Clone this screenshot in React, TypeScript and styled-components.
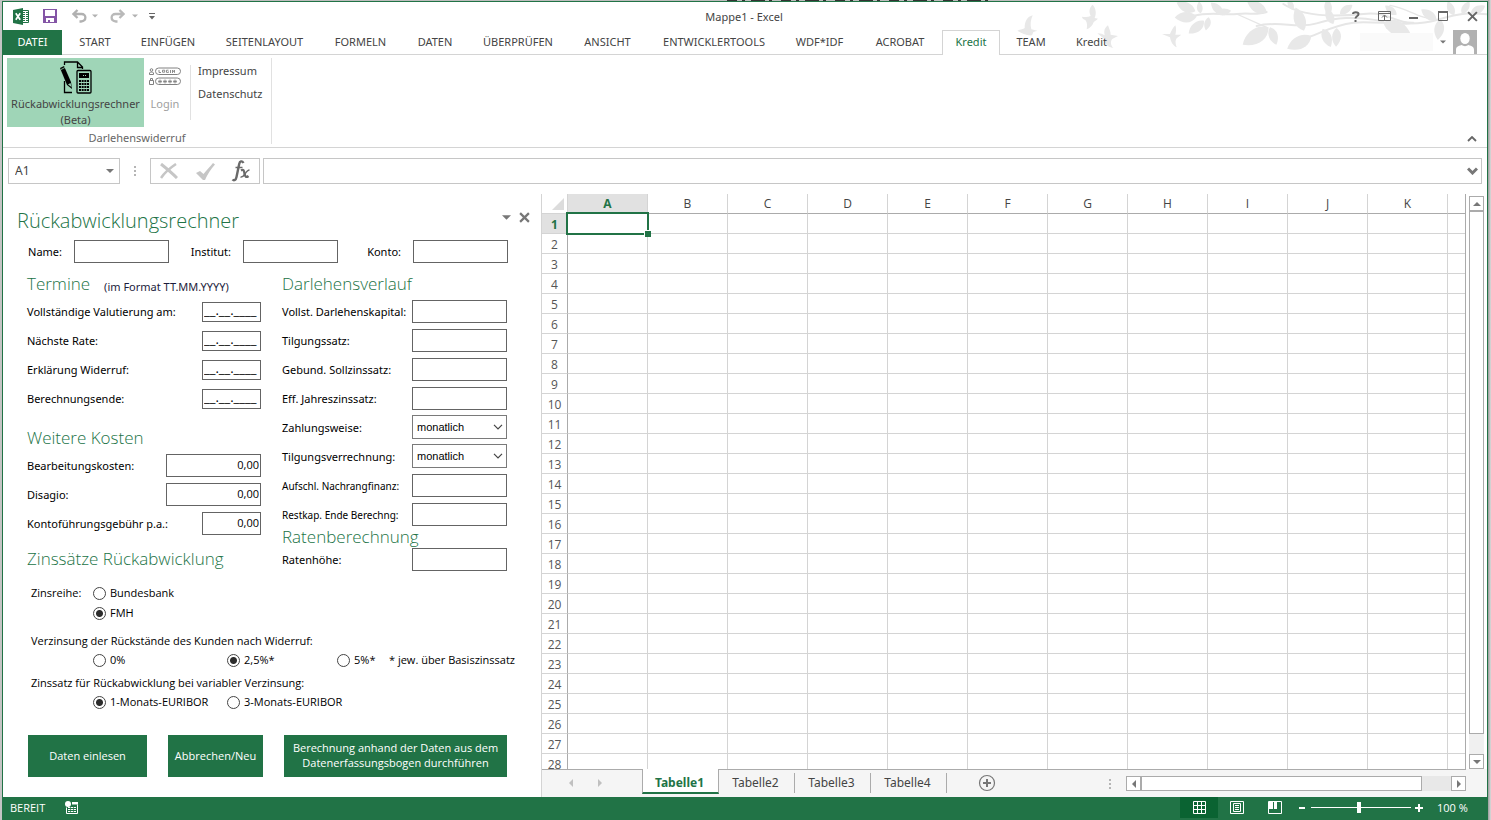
import React, { useState } from 'react';
import styled, { createGlobalStyle } from 'styled-components';

const GREEN = '#217346';
const LINE = '#d4d4d4';
const DARK_LINE = '#ababab';
const ICON = '#777777';
const UI_FONT = '"Noto Sans", "Open Sans", sans-serif';
const FORM_FONT = '"Open Sans", "Noto Sans", sans-serif';

const GlobalStyle = createGlobalStyle`
  * { box-sizing: border-box; }
  body {
    margin: 0;
    background: #c4c4c4;
    font-family: ${UI_FONT};
    font-size: 11px;
    line-height: 16px;
    color: #444444;
  }
  button, input, select { font: inherit; color: inherit; margin: 0; }
  button { padding: 0; border: 0; background: none; }
  svg { display: block; flex: none; }
`;

/* ---------- window frame ---------- */

const Desktop = styled.div`
  height: 100vh;
  min-height: 600px;
  display: flex;
  flex-direction: column;
  padding: 0 3px 0 2px;
  background: linear-gradient(to left, #dcdcdc 0, #9c9c9c 3px, #c4c4c4 4px);
`;

const DesktopEdge = styled.div`
  height: 1px;
  flex: none;
  display: flex;
  justify-content: center;
  padding-left: 230px;
  background: #bdbdbd;
`;

const Window = styled.div`
  flex: 1;
  min-height: 0;
  display: flex;
  flex-direction: column;
  position: relative;
  background: #ffffff;
  border: 1px solid ${GREEN};
  border-bottom: 0;
`;

const Decoration = styled.svg`
  position: absolute;
  top: 0;
  right: 0;
  pointer-events: none;
`;

const TitleBar = styled.header`
  height: 28px;
  flex: none;
  display: grid;
  grid-template-columns: 1fr auto 1fr;
  align-items: center;
  position: relative;
`;

const QuickAccess = styled.div`
  display: flex;
  align-items: center;
  padding-left: 9px;
`;

const IconButton = styled.button<{ $w: number; $h?: number }>`
  width: ${(p) => p.$w}px;
  height: ${(p) => p.$h ?? 24}px;
  display: flex;
  align-items: center;
  justify-content: center;
  flex: none;
`;

const WindowTitle = styled.h1`
  margin: 0;
  font-size: 11px;
  font-weight: 400;
  padding: 2px 2px 0 0;
`;

const WindowControls = styled.div`
  display: flex;
  justify-content: flex-end;
  align-items: center;
`;

/* ---------- ribbon ---------- */

const TabRow = styled.nav`
  height: 25px;
  flex: none;
  display: flex;
  position: relative;
  border-bottom: 1px solid ${LINE};
`;

const FileTab = styled.button`
  width: 59px;
  height: 25px;
  padding-bottom: 1px;
  background: ${GREEN};
  color: #ffffff;
  margin-right: 2px;
`;

const RibbonTab = styled.button<{ $active?: boolean; $w: number }>`
  width: ${(p) => p.$w}px;
  height: 25px;
  padding-bottom: 2px;
  white-space: nowrap;
  border: 1px solid ${(p) => (p.$active ? LINE : 'transparent')};
  border-bottom: 0;
  background: ${(p) => (p.$active ? '#ffffff' : 'transparent')};
  color: ${(p) => (p.$active ? GREEN : '#444444')};
`;

const Account = styled.div`
  margin-left: auto;
  display: flex;
  align-items: flex-end;
  padding-right: 10px;
`;

const AccountName = styled.span`
  width: 73px;
  height: 18px;
  margin-bottom: 3px;
  background: #fafafa;
`;

const Ribbon = styled.section`
  height: 93px;
  flex: none;
  display: flex;
  align-items: flex-start;
  border-bottom: 1px solid ${LINE};
`;

const Group = styled.div`
  width: 269px;
  height: 86px;
  margin-top: 3px;
  padding-left: 4px;
  display: flex;
  flex-direction: column;
  justify-content: space-between;
  border-right: 1px solid #e1e1e1;
`;

const GroupItems = styled.div`
  height: 69px;
  display: flex;
  align-items: flex-start;
`;

const GroupLabel = styled.div`
  line-height: 12px;
  padding-right: 4px;
  text-align: center;
  color: #666666;
`;

const LargeButton = styled.button<{ $w: number; $active?: boolean; $dim?: boolean }>`
  width: ${(p) => p.$w}px;
  height: 69px;
  display: flex;
  flex-direction: column;
  align-items: center;
  white-space: nowrap;
  padding-top: 3px;
  background: ${(p) => (p.$active ? '#9fd5b7' : 'transparent')};
  color: ${(p) => (p.$dim ? '#a0a0a0' : '#444444')};
`;

const ButtonArt = styled.span<{ $drop?: boolean }>`
  height: 35px;
  flex: none;
  padding-top: ${(p) => (p.$drop ? 6 : 0)}px;
  display: flex;
  align-items: flex-start;
`;

const LinkList = styled.div`
  height: 55px;
  margin: 7px 0 0 4px;
  padding-left: 7px;
  display: flex;
  flex-direction: column;
  align-items: flex-start;
  border-left: 1px solid #e1e1e1;
`;

const SmallButton = styled.button`
  height: 23px;
  display: flex;
  align-items: flex-start;
  line-height: 11px;
`;

const Collapse = styled.div`
  margin-left: auto;
  align-self: flex-end;
  padding-right: 4px;
`;

/* ---------- formula bar ---------- */

const FormulaBar = styled.section`
  height: 46px;
  flex: none;
  display: flex;
  padding: 10px 5px;
`;

const NameBox = styled.div`
  width: 112px;
  display: flex;
  align-items: center;
  border: 1px solid #c6c6c6;
  padding: 0 5px 0 6px;
  input { width: 80px; border: 0; outline: 0; padding: 0; background: none; font-size: 12px; }
  button { margin-left: auto; }
`;

const Dots = styled.div<{ $push?: boolean }>`
  width: 30px;
  margin-left: ${(p) => (p.$push ? 'auto' : 0)};
  display: flex;
  align-items: center;
  justify-content: center;
`;

const FormulaTools = styled.div`
  width: 110px;
  display: flex;
  align-items: center;
  border: 1px solid #c6c6c6;
`;

const FormulaField = styled.div`
  flex: 1;
  display: flex;
  align-items: center;
  margin-left: 3px;
  border: 1px solid #c6c6c6;
  input { flex: 1; border: 0; outline: 0; min-width: 0; background: none; }
`;

/* ---------- task pane ---------- */

const Main = styled.main`
  flex: 1;
  min-height: 0;
  display: flex;
`;

const Pane = styled.aside`
  width: 538px;
  flex: none;
  padding: 11px 33px 0 24px;
  overflow: hidden;
  color: #000000;
`;

const PaneHeader = styled.div`
  height: 32px;
  display: flex;
  align-items: center;
  margin: 0 -25px 0 -10px;
  button { margin-bottom: 8px; }
`;

const PaneTitle = styled.h2`
  margin: 0 auto 0 0;
  font-family: ${FORM_FONT};
  font-size: 20px;
  line-height: 28px;
  font-weight: 300;
  color: ${GREEN};
`;

const IdentityRow = styled.div`
  display: grid;
  grid-template-columns: 142px 169px 170px;
  height: 23px;
  margin-top: 3px;
`;

const Pair = styled.div`
  display: flex;
  align-items: center;
  justify-content: flex-end;
  gap: 12px;
`;

const Columns = styled.div`
  display: grid;
  grid-template-columns: 234px 225px;
  justify-content: space-between;
  align-items: start;
  padding-right: 1px;
`;

const SectionTitle = styled.h3<{ $gap?: number; $h?: number }>`
  margin: ${(p) => p.$gap ?? 0}px 0 0;
  height: ${(p) => p.$h ?? 26}px;
  display: flex;
  align-items: center;
  gap: 14px;
  font-family: ${FORM_FONT};
  font-size: 17px;
  font-weight: 300;
  white-space: nowrap;
  color: ${GREEN};
  small { font-family: ${UI_FONT}; font-size: 11px; font-weight: 400; color: #1c1c3c; padding-top: 5px; }
`;

const FieldRow = styled.div<{ $small?: boolean }>`
  height: 29px;
  display: flex;
  align-items: center;
  justify-content: space-between;
  white-space: nowrap;
  label { font-size: ${(p) => (p.$small ? 10 : 11)}px; }
`;

const TextBox = styled.input<{ $w?: number; $date?: boolean; $right?: boolean }>`
  width: ${(p) => p.$w ?? 95}px;
  height: ${(p) => (p.$date ? 20 : 23)}px;
  flex: none;
  padding: 0 1px 3px;
  border: 1px solid #646464;
  border-radius: 0;
  background: #ffffff;
  text-align: ${(p) => (p.$right ? 'right' : 'left')};
  font-family: ${FORM_FONT};
  font-size: ${(p) => (p.$date ? 13 : 11)}px;
`;

const SelectWrap = styled.div`
  width: 95px;
  height: 24px;
  margin-bottom: 2px;
  display: grid;
  align-items: center;
  select, svg { grid-area: 1 / 1; }
  select {
    appearance: none;
    width: 95px;
    height: 24px;
    padding: 0 4px;
    border: 1px solid #7a7a7a;
    border-radius: 0;
    background: #ffffff;
    font-family: "Liberation Sans", sans-serif;
    font-size: 11px;
  }
  svg { justify-self: end; margin-right: 4px; pointer-events: none; }
`;

const Options = styled.fieldset<{ $gap: number }>`
  margin: ${(p) => p.$gap}px 0 0 4px;
  padding: 0;
  border: 0;
  min-width: 0;
  white-space: nowrap;
  font-family: ${FORM_FONT};
  legend { padding: 0; height: 18px; line-height: 18px; }
`;

const OptionGrid = styled.div<{ $cols: string; $indent?: boolean }>`
  display: grid;
  grid-template-columns: ${(p) => p.$cols};
  grid-auto-rows: 20px;
  align-items: center;
  padding-left: ${(p) => (p.$indent ? 62 : 0)}px;
`;

const Option = styled.label<{ $col?: number }>`
  display: flex;
  align-items: center;
  gap: 4px;
  grid-column: ${(p) => p.$col ?? 'auto'};
`;

const Radio = styled.input`
  appearance: none;
  width: 13px;
  height: 13px;
  border: 1px solid #444444;
  border-radius: 50%;
  background: #ffffff;
  &:checked { background: radial-gradient(circle, #2c2c2c 3px, #ffffff 4px); }
`;

const Actions = styled.div`
  display: flex;
  justify-content: space-between;
  height: 42px;
  margin: 23px 1px 0 1px;
`;

const ActionButton = styled.button<{ $w: number }>`
  width: ${(p) => p.$w}px;
  background: ${GREEN};
  color: #ffffff;
  font-family: ${FORM_FONT};
  line-height: 15px;
  padding-bottom: 2px;
  white-space: nowrap;
`;

/* ---------- sheet ---------- */

const SheetArea = styled.section`
  flex: 1;
  min-width: 0;
  display: flex;
  flex-direction: column;
  border-left: 1px solid ${LINE};
`;

const SheetRow = styled.div`
  flex: 1;
  min-height: 0;
  display: flex;
`;

const GridClip = styled.div`
  flex: 1;
  min-width: 0;
  overflow: hidden;
  border-right: 1px solid ${DARK_LINE};
`;

const Grid = styled.table`
  width: 100%;
  table-layout: fixed;
  border-collapse: separate;
  border-spacing: 0;
  font-family: ${FORM_FONT};
  color: #444444;
`;

const ColHead = styled.th<{ $on?: boolean }>`
  width: 80px;
  height: 20px;
  padding: 0;
  font-size: 12px;
  line-height: 16px;
  font-weight: ${(p) => (p.$on ? 700 : 400)};
  color: ${(p) => (p.$on ? GREEN : '#444444')};
  background: ${(p) => (p.$on ? '#e1e1e1' : '#ffffff')};
  border-right: 1px solid ${LINE};
  border-bottom: 1px solid ${DARK_LINE};
`;

const RestHead = styled.td`
  padding: 0;
  border-bottom: 1px solid ${DARK_LINE};
`;

const Corner = styled.th`
  width: 26px;
  height: 20px;
  padding: 0 3px 0 0;
  border-right: 1px solid ${LINE};
  border-bottom: 1px solid ${LINE};
  svg { margin-left: auto; }
`;

const RowHead = styled.th<{ $on?: boolean }>`
  height: 20px;
  padding: 2px 0 0;
  font-size: 12px;
  line-height: 16px;
  font-weight: ${(p) => (p.$on ? 700 : 400)};
  color: ${(p) => (p.$on ? GREEN : '#555555')};
  background: ${(p) => (p.$on ? '#e1e1e1' : '#ffffff')};
  border-right: 1px solid ${DARK_LINE};
  border-bottom: 1px solid ${LINE};
`;

const Cell = styled.td`
  height: 20px;
  padding: 0;
  position: relative;
  border-right: 1px solid ${LINE};
  border-bottom: 1px solid ${LINE};
  &:last-child { border-right: 0; }
`;

const Selection = styled.span`
  position: absolute;
  inset: -2px;
  z-index: 1;
  border: 2px solid ${GREEN};
  &::after {
    content: "";
    position: absolute;
    right: -4px;
    bottom: -4px;
    width: 6px;
    height: 6px;
    background: ${GREEN};
    border: solid #ffffff;
    border-width: 1px 0 0 1px;
  }
`;

const VScroll = styled.div`
  width: 15px;
  margin: 2px 3px 0;
  display: flex;
  flex-direction: column;
  background: #f0f0f0;
`;

const ScrollButton = styled.button`
  width: 15px;
  height: 15px;
  flex: none;
  display: flex;
  align-items: center;
  justify-content: center;
  border: 1px solid ${DARK_LINE};
  background: #ffffff;
`;

const VThumb = styled.div`
  flex: 0 1 524px;
  border: 1px solid ${DARK_LINE};
  background: #ffffff;
`;

const Track = styled.div`
  flex: 1 0 20px;
`;

const SheetBar = styled.div`
  height: 28px;
  flex: none;
  display: flex;
  padding-right: 21px;
  background: #f5f5f5;
`;

const SheetBarItems = styled.div`
  flex: 1;
  display: flex;
  border-top: 1px solid ${DARK_LINE};
`;

const SheetNav = styled.div`
  width: 100px;
  display: flex;
  align-items: center;
  padding: 0 0 2px 16px;
  gap: 4px;
`;

const SheetTab = styled.button<{ $active?: boolean }>`
  width: ${(p) => (p.$active ? 77 : 76)}px;
  height: ${(p) => (p.$active ? 25 : 20)}px;
  margin-top: ${(p) => (p.$active ? -1 : 3)}px;
  padding-top: ${(p) => (p.$active ? 4 : 0)}px;
  padding-right: 2px;
  font-size: 12px;
  font-weight: ${(p) => (p.$active ? 700 : 400)};
  color: ${(p) => (p.$active ? GREEN : '#444444')};
  background: ${(p) => (p.$active ? '#ffffff' : 'transparent')};
  border: solid ${DARK_LINE};
  border-width: ${(p) => (p.$active ? '0 1px 2px' : '0 1px 0 0')};
  border-bottom-color: ${GREEN};
`;

const AddSheet = styled.button`
  margin: 0 0 2px 31px;
`;

const HScroll = styled.div`
  width: 340px;
  height: 15px;
  margin: 6px 0 0 1px;
  display: flex;
  background: #e8e8e8;
`;

const HThumb = styled.div`
  width: 281px;
  border: 1px solid ${DARK_LINE};
  background: #ffffff;
`;

/* ---------- status bar ---------- */

const StatusBar = styled.footer`
  height: 23px;
  flex: none;
  display: flex;
  align-items: center;
  padding: 0 0 2px 7px;
  background: ${GREEN};
  color: #ffffff;
  font-family: ${FORM_FONT};
`;

const StatusTools = styled.div`
  margin-left: auto;
  display: flex;
  align-items: center;
`;

const ViewButton = styled.button<{ $active?: boolean }>`
  width: 38px;
  height: 21px;
  display: flex;
  align-items: center;
  justify-content: center;
  background: ${(p) => (p.$active ? '#0a6332' : 'transparent')};
`;

const Zoom = styled.input`
  appearance: none;
  width: 100px;
  height: 12px;
  margin: 0 2px;
  background: linear-gradient(#ffffff, #ffffff) center / 100% 1px no-repeat;
  &::-webkit-slider-thumb {
    appearance: none;
    width: 4px;
    height: 11px;
    background: #ffffff;
  }
`;

const ZoomValue = styled.span`
  width: 50px;
  margin-left: 13px;
`;

/* ---------- small drawings ---------- */

type CaretProps = { dir?: 'down' | 'up' | 'left' | 'right'; size?: number; color?: string };

const Caret = ({ dir = 'down', size = 8, color = ICON }: CaretProps) => {
  const paths = { down: 'M0 2h8L4 6z', up: 'M0 6h8L4 2z', left: 'M6 0v8L2 4z', right: 'M2 0v8l4-4z' };
  return (
    <svg width={size} height={size} viewBox="0 0 8 8"><path d={paths[dir]} fill={color} /></svg>
  );
};

const Cross = ({ size, width, color = ICON }: { size: number; width: number; color?: string }) => (
  <svg width={size} height={size} viewBox="0 0 10 10"><path d="M1 1l8 8M9 1L1 9" stroke={color} strokeWidth={width} fill="none" /></svg>
);

const ThreeDots = () => (
  <svg width="2" height="12" viewBox="0 0 2 12" fill="#b5b5b5"><path d="M0 1h2v2H0zM0 5h2v2H0zM0 9h2v2H0z" /></svg>
);

const ExcelLogo = () => (
  <svg width="17" height="17" viewBox="0 0 17 17">
    <path d="M9 2.500h6.500v12H9z" fill="#fff" stroke={GREEN} />
    <path d="M10 4.500h2M10 6.500h2M10 8.500h2M10 10.500h2M10 12.500h2M13 4.500h2M13 6.500h2M13 8.500h2M13 10.500h2M13 12.500h2" stroke={GREEN} />
    <path d="M0 2l10-2v17L0 15z" fill={GREEN} />
    <path d="M2.800 5.200l4.400 6.600M7.200 5.200l-4.400 6.600" stroke="#fff" strokeWidth="1.700" />
  </svg>
);

const SaveIcon = () => (
  <svg width="14" height="14" viewBox="0 0 14 14">
    <path d="M0 0h14v14H0z" fill="#8455a6" />
    <path d="M2 1h10v6H2zM3 9h8v4H7v-2H5v2H3z" fill="#fff" />
  </svg>
);

const UndoIcon = () => (
  <svg width="15" height="14" viewBox="0 0 15 14" fill="none" stroke="#b1b1b1" strokeWidth="2.300">
    <path d="M5.500 1L1.500 5l4 4M2 5h7.500c5 0 5.500 7-.5 7.500H7.500" />
  </svg>
);

const RedoIcon = () => (
  <svg width="15" height="14" viewBox="0 0 15 14" fill="none" stroke="#b9b9b9" strokeWidth="2.300">
    <path d="M9.500 1l4 4-4 4M13 5H5.500c-5 0-5.500 7 .5 7.500h1.500" />
  </svg>
);

const CalculatorArt = () => (
  <svg width="32" height="33" viewBox="0 0 32 33">
    <path d="M4.500 4V1h13l5 5V8M17.500 1v5.500h5M4.500 20v11.500H12" fill="none" stroke="#000" strokeWidth="1.300" />
    <path d="M0 7l4-2 7 16 1 7-5-4z" fill="#000" />
    <path d="M8 23.500l2.500-1.500 1 4z" fill="#9fd5b7" />
    <path d="M1 8.500l4-2" stroke="#9fd5b7" strokeWidth=".8" />
    <rect x="17" y="9.500" width="14" height="22.500" rx="1" fill="none" stroke="#000" strokeWidth="1.300" />
    <path d="M19 12h10v5H19z" fill="#000" />
    <path d="M23 14.500h4" stroke="#9fd5b7" strokeDasharray="1 1" />
    <path d="M19 20h10M19 23h10M19 26h10M19 29h10" stroke="#000" strokeWidth="2" strokeDasharray="2 .67" />
  </svg>
);

const LoginArt = () => (
  <svg width="32" height="19" viewBox="0 0 32 19" fill="none" stroke="#808080">
    <rect x="6.500" y="1" width="25" height="6.500" rx="3.200" />
    <rect x="6.500" y="11" width="25" height="6.500" rx="3.200" />
    <circle cx="2.500" cy="3" r="1.300" />
    <path d="M.5 7.500V6l1-1h2l1 1v1.500zM.5 13.500h4v4h-4zM1.500 13.500v-2h2v2" />
    <path d="M10 3v2.500h2M13.500 3.200h2.200v2h-2.200zM19.500 3.200h-2v2.200h2V4.500M21.500 3v3M23.500 6V3l2 2.500V3" strokeWidth=".9" />
    <path d="M11 12.500v4M9 14.500h4M9.700 13.200l2.600 2.600M12.300 13.200l-2.600 2.600M16 12.500v4M14 14.500h4M14.700 13.200l2.600 2.600M17.300 13.200l-2.600 2.600M21 12.500v4M19 14.500h4M19.700 13.200l2.600 2.600M22.300 13.200l-2.600 2.600M26 12.500v4M24 14.500h4M24.700 13.200l2.600 2.600M27.300 13.200l-2.600 2.600" strokeWidth=".8" />
  </svg>
);

const FxIcon = () => (
  <svg width="20" height="22" viewBox="0 0 20 22" fill="none" stroke="#6a6a6a">
    <path d="M12.500 3C11 .5 8.800 1 8.200 4L5.500 17c-.6 3-2.500 4-4 2.500" strokeWidth="2.400" />
    <path d="M4.500 7.500h7" strokeWidth="1.500" />
    <path d="M10 10.500c2.500-1.500 3 0 3.500 3s1.500 4.500 4 2.500" strokeWidth="2.300" />
    <path d="M18.500 10c-2 0-3.500 2.500-4.700 4.200S11 17.500 9.500 17" strokeWidth="1.500" />
  </svg>
);

const Avatar = () => (
  <svg width="24" height="24" viewBox="0 0 24 24">
    <path d="M0 0h24v24H0z" fill="#b1b1b1" />
    <ellipse cx="12" cy="8.500" rx="4.700" ry="5.500" fill="#fff" />
    <path d="M3 24v-4c0-3 2-4 5.500-5 2 1.500 5 1.500 7 0 3.500 1 5.500 2 5.500 5v4z" fill="#fff" />
  </svg>
);

// each leaf: x, y of its stem, angle, length
const leaves: [number, number, number, number][] = [
  [436, 34, 205, 62], [440, 50, 178, 66], [462, 62, 140, 60], [452, 40, 262, 36], [476, 52, 102, 40],
  [520, 42, 222, 50], [500, 40, 350, 44], [650, 36, 208, 66], [656, 82, 146, 94], [660, 82, 70, 56],
  [762, 92, 250, 74], [784, 108, 152, 82], [818, 86, 66, 60], [860, 84, 92, 56], [850, 72, 246, 52],
  [730, 30, 244, 36], [838, 44, 262, 48], [870, 42, 324, 46], [1000, 68, 22, 88],
  [1040, 44, 218, 44], [1160, 60, 214, 56], [1170, 58, 96, 62], [1212, 46, 246, 46], [1236, 42, 300, 44], [1262, 42, 330, 50],
];

const leafPath = (l: number) =>
  `M0 0C${l * 0.25} ${-l * 0.34} ${l * 0.65} ${-l * 0.32} ${l} 0C${l * 0.7} ${l * 0.3} ${l * 0.25} ${l * 0.3} 0 0`;

const Branches = () => (
  <Decoration width="471" height="60" viewBox="-102 6 1413 180" aria-hidden="true">
    <g fill="none" stroke="#e6e6e6" strokeLinecap="round">
      <path d="M430 48c50-14 90-2 130-6s60 4 90-6M620 78c70-18 120 10 180-8s110-22 200-6" strokeWidth="6" />
      <path d="M780 110c40-14 70-34 130-42s170 16 250-8 110-22 163-16M700 12c60 40 160 38 240 30s90 28 150 26" strokeWidth="6" />
      <path d="M1020 16c60 10 80 40 150 44M560 42l90 40" strokeWidth="4" />
    </g>
    <g fill="#e8e8e8">
      {leaves.map(([x, y, a, l], i) => (
        <path key={i} transform={`translate(${x} ${y}) rotate(${a})`} d={leafPath(l)} />
      ))}
      <path d="M-98 92c10-4 18-4 22-8 0-20 8-34 24-38-6 14-8 28-4 42l18 4-12 4-4 10c-14 2-30-6-44-14z" />
      <path d="M96 50c10 2 18 2 26-2-6-14-4-26 6-34 10 12 12 26 6 40l10 2c-6 6-12 8-14 12-2 8-10 16-20 20 2-12 2-20-4-28-6-2-10-6-10-10z" />
      <path d="M142 100c10 0 16 2 22 6-4-16 2-24 10-30 4 12 8 18 8 28l22 4-16 8c-8 6-6 20 2 28-18-2-26-14-26-26z" />
      <path d="M336 102l24 0c4-8 8-18 16-26 4 10 2 20 0 28l18 0-10 8c-10 6-8 18-4 30-14-6-18-20-20-30z" />
    </g>
  </Decoration>
);

/* ---------- data ---------- */

const ribbonTabs = [
  { label: 'START', w: 62 }, { label: 'EINFÜGEN', w: 84 }, { label: 'SEITENLAYOUT', w: 109 },
  { label: 'FORMELN', w: 83 }, { label: 'DATEN', w: 66 }, { label: 'ÜBERPRÜFEN', w: 100 },
  { label: 'ANSICHT', w: 79 }, { label: 'ENTWICKLERTOOLS', w: 134 }, { label: 'WDF*IDF', w: 77 },
  { label: 'ACROBAT', w: 84 }, { label: 'Kredit', w: 58, active: true }, { label: 'TEAM', w: 62 }, { label: 'Kredit', w: 59 },
];

const dates = ['Vollständige Valutierung am:', 'Nächste Rate:', 'Erklärung Widerruf:', 'Berechnungsende:'];
const costs = [
  { label: 'Bearbeitungskosten:', w: 95 }, { label: 'Disagio:', w: 95 }, { label: 'Kontoführungsgebühr p.a.:', w: 59 },
];
const loan = [
  { label: 'Vollst. Darlehenskapital:' }, { label: 'Tilgungssatz:' }, { label: 'Gebund. Sollzinssatz:' },
  { label: 'Eff. Jahreszinssatz:' }, { label: 'Zahlungsweise:', select: true }, { label: 'Tilgungsverrechnung:', select: true },
  { label: 'Aufschl. Nachrangfinanz:', small: true }, { label: 'Restkap. Ende Berechng:', small: true },
];
const letters = 'ABCDEFGHIJK'.split('');
const rows = Array.from({ length: 28 }, (_, i) => i + 1);

/* ---------- page ---------- */

const RadioOption = ({ name, label, on, col }: { name: string; label: string; on?: boolean; col?: number }) => (
  <Option $col={col}><Radio type="radio" name={name} defaultChecked={on} />{label}</Option>
);

export default function App() {
  const [zoom, setZoom] = useState(48);
  return (
    <>
      <GlobalStyle />
      <Desktop>
        <DesktopEdge>
          <svg width="270" height="1" aria-hidden="true">
            <path d="M2 .5h268" stroke="#333" strokeDasharray="10 5 3 6 14 4 3 9" />
          </svg>
        </DesktopEdge>
        <Window>
          <Branches />
          <TitleBar>
            <QuickAccess>
              <IconButton $w={18} aria-label="Excel"><ExcelLogo /></IconButton>
              <IconButton $w={40} aria-label="Speichern"><SaveIcon /></IconButton>
              <IconButton $w={19} aria-label="Rückgängig"><UndoIcon /></IconButton>
              <IconButton $w={12} aria-label="Rückgängig-Liste"><Caret size={6} color="#b1b1b1" /></IconButton>
              <IconButton $w={32} aria-label="Wiederholen"><RedoIcon /></IconButton>
              <IconButton $w={4} aria-label="Wiederholen-Liste"><Caret size={6} color="#b1b1b1" /></IconButton>
              <IconButton $w={30} aria-label="Symbolleiste anpassen">
                <svg width="6" height="7" viewBox="0 0 6 7" fill="#666"><path d="M0 0h6v1H0zM0 3h6L3 6.500z" /></svg>
              </IconButton>
            </QuickAccess>
            <WindowTitle>Mappe1 - Excel</WindowTitle>
            <WindowControls>
              <IconButton $w={29} aria-label="Hilfe">
                <svg width="8" height="11" viewBox="0 0 8 11" fill="none" stroke="#666" strokeWidth="2"><path d="M1 3c0-2.500 5.500-2.500 5.500 0S3.500 5 3.500 7.500M3.500 9v2" /></svg>
              </IconButton>
              <IconButton $w={29} aria-label="Menüband-Anzeigeoptionen">
                <svg width="13" height="10" viewBox="0 0 13 10" fill="none" stroke="#666"><path d="M.5.5h12v9H.5zM.5 2.500h12M6.500 9V4.500M4 6.500l2.500-2.500L9 6.500" /></svg>
              </IconButton>
              <IconButton $w={29} aria-label="Minimieren">
                <svg width="9" height="10" viewBox="0 0 9 10"><path d="M0 6h9v2H0z" fill="#666" /></svg>
              </IconButton>
              <IconButton $w={29} aria-label="Maximieren">
                <svg width="10" height="10" viewBox="0 0 10 10"><path d="M.5.5h9v9h-9z" fill="none" stroke="#666" /><path d="M0 0h10v2H0z" fill="#666" /></svg>
              </IconButton>
              <IconButton $w={30} aria-label="Schließen"><Cross size={11} width={1.8} color="#666" /></IconButton>
            </WindowControls>
          </TitleBar>

          <TabRow>
            <FileTab>DATEI</FileTab>
            {ribbonTabs.map((t, i) => (
              <RibbonTab key={i} $w={t.w} $active={t.active}>{t.label}</RibbonTab>
            ))}
            <Account>
              <AccountName />
              <IconButton $w={20} aria-label="Konto"><Caret size={6} /></IconButton>
              <Avatar />
            </Account>
          </TabRow>

          <Ribbon>
            <Group>
              <GroupItems>
                <LargeButton $w={137} $active>
                  <ButtonArt><CalculatorArt /></ButtonArt>
                  <span>Rückabwicklungsrechner</span>
                  <span>(Beta)</span>
                </LargeButton>
                <LargeButton $w={42} $dim>
                  <ButtonArt $drop><LoginArt /></ButtonArt>
                  <span>Login</span>
                </LargeButton>
                <LinkList>
                  <SmallButton>Impressum</SmallButton>
                  <SmallButton>Datenschutz</SmallButton>
                </LinkList>
              </GroupItems>
              <GroupLabel>Darlehenswiderruf</GroupLabel>
            </Group>
            <Collapse>
              <IconButton $w={22} $h={16} aria-label="Menüband reduzieren">
                <svg width="10" height="6" viewBox="0 0 10 6"><path d="M1 5l4-4 4 4" fill="none" stroke="#666" strokeWidth="1.800" /></svg>
              </IconButton>
            </Collapse>
          </Ribbon>

          <FormulaBar>
            <NameBox>
              <input aria-label="Namenfeld" defaultValue="A1" />
              <button aria-label="Namen öffnen"><Caret size={8} /></button>
            </NameBox>
            <Dots><ThreeDots /></Dots>
            <FormulaTools>
              <IconButton $w={36} aria-label="Abbrechen">
                <svg width="18" height="16" viewBox="0 0 18 16" stroke="#c6c6c6" fill="none"><path d="M1 1c5 4 10 8 16 14" strokeWidth="3" /><path d="M16 1C10 5 5 9 1 15" strokeWidth="2.500" /></svg>
              </IconButton>
              <IconButton $w={36} aria-label="Eingeben">
                <svg width="19" height="17" viewBox="0 0 19 17"><path d="M0 10l4-2 3.500 3C11 7 14 3.500 17 0l2 1.500C15 6 11.500 11 9 17H7z" fill="#c6c6c6" /></svg>
              </IconButton>
              <IconButton $w={36} aria-label="Funktion einfügen"><FxIcon /></IconButton>
            </FormulaTools>
            <FormulaField>
              <input aria-label="Bearbeitungsleiste" />
              <IconButton $w={17} aria-label="Bearbeitungsleiste erweitern">
                <svg width="11" height="8" viewBox="0 0 11 8"><path d="M1 1.500L5.500 6 10 1.500" fill="none" stroke="#777" strokeWidth="3" /></svg>
              </IconButton>
            </FormulaField>
          </FormulaBar>

          <Main>
            <Pane>
              <PaneHeader>
                <PaneTitle>Rückabwicklungsrechner</PaneTitle>
                <IconButton $w={17} aria-label="Bereichsoptionen"><Caret size={9} /></IconButton>
                <IconButton $w={18} aria-label="Bereich schließen"><Cross size={11} width={2} /></IconButton>
              </PaneHeader>
              <IdentityRow>
                {['Name', 'Institut', 'Konto'].map((n) => (
                  <Pair key={n}>
                    <label htmlFor={n}>{n}:</label>
                    <TextBox id={n} />
                  </Pair>
                ))}
              </IdentityRow>
              <Columns>
                <div>
                  <SectionTitle $gap={8}>Termine <small>(im Format TT.MM.YYYY)</small></SectionTitle>
                  {dates.map((d) => (
                    <FieldRow key={d}>
                      <label htmlFor={d}>{d}</label>
                      <TextBox id={d} $w={59} $date defaultValue="__.__.____" />
                    </FieldRow>
                  ))}
                  <SectionTitle $gap={12}>Weitere Kosten</SectionTitle>
                  {costs.map((c) => (
                    <FieldRow key={c.label}>
                      <label htmlFor={c.label}>{c.label}</label>
                      <TextBox id={c.label} $w={c.w} $right defaultValue="0,00" />
                    </FieldRow>
                  ))}
                  <SectionTitle $gap={8}>Zinssätze Rückabwicklung</SectionTitle>
                </div>
                <div>
                  <SectionTitle $gap={8}>Darlehensverlauf</SectionTitle>
                  {loan.map((l) => (
                    <FieldRow key={l.label} $small={l.small}>
                      <label htmlFor={l.label}>{l.label}</label>
                      {l.select ? (
                        <SelectWrap>
                          <select id={l.label}><option>monatlich</option></select>
                          <svg width="10" height="6" viewBox="0 0 10 6"><path d="M1 .8l4 4 4-4" fill="none" stroke="#444" strokeWidth="1.200" /></svg>
                        </SelectWrap>
                      ) : (
                        <TextBox id={l.label} />
                      )}
                    </FieldRow>
                  ))}
                  <SectionTitle $h={16}>Ratenberechnung</SectionTitle>
                  <FieldRow>
                    <label htmlFor="rate">Ratenhöhe:</label>
                    <TextBox id="rate" />
                  </FieldRow>
                </div>
              </Columns>

              <Options $gap={9} aria-label="Zinsreihe">
                <OptionGrid $cols="62px auto">
                  <span>Zinsreihe:</span>
                  <RadioOption name="reihe" label="Bundesbank" />
                  <RadioOption name="reihe" label="FMH" on col={2} />
                </OptionGrid>
              </Options>
              <Options $gap={9}>
                <legend>Verzinsung der Rückstände des Kunden nach Widerruf:</legend>
                <OptionGrid $cols="134px 110px 52px auto" $indent>
                  <RadioOption name="verz" label="0%" />
                  <RadioOption name="verz" label="2,5%*" on />
                  <RadioOption name="verz" label="5%*" />
                  <span>* jew. über Basiszinssatz</span>
                </OptionGrid>
              </Options>
              <Options $gap={4}>
                <legend>Zinssatz für Rückabwicklung bei variabler Verzinsung:</legend>
                <OptionGrid $cols="134px auto" $indent>
                  <RadioOption name="var" label="1-Monats-EURIBOR" on />
                  <RadioOption name="var" label="3-Monats-EURIBOR" />
                </OptionGrid>
              </Options>

              <Actions>
                <ActionButton $w={119}>Daten einlesen</ActionButton>
                <ActionButton $w={95}>Abbrechen/Neu</ActionButton>
                <ActionButton $w={223}>Berechnung anhand der Daten aus dem<br />Datenerfassungsbogen durchführen</ActionButton>
              </Actions>
            </Pane>

            <SheetArea>
              <SheetRow>
                <GridClip>
                  <Grid>
                    <thead>
                      <tr>
                        <Corner aria-label="Alles auswählen">
                          <svg width="12" height="12" viewBox="0 0 12 12"><path d="M12 0v12H0z" fill="#dcdcdc" /></svg>
                        </Corner>
                        {letters.map((l) => <ColHead key={l} scope="col" $on={l === 'A'}>{l}</ColHead>)}
                        <RestHead />
                      </tr>
                    </thead>
                    <tbody>
                      {rows.map((r) => (
                        <tr key={r}>
                          <RowHead scope="row" $on={r === 1}>{r}</RowHead>
                          {letters.map((l) => (
                            <Cell key={l}>{r === 1 && l === 'A' ? <Selection /> : null}</Cell>
                          ))}
                          <Cell />
                        </tr>
                      ))}
                    </tbody>
                  </Grid>
                </GridClip>
                <VScroll>
                  <ScrollButton aria-label="Nach oben"><Caret dir="up" size={8} /></ScrollButton>
                  <VThumb />
                  <Track />
                  <ScrollButton aria-label="Nach unten"><Caret size={8} /></ScrollButton>
                </VScroll>
              </SheetRow>
              <SheetBar>
                <SheetBarItems>
                  <SheetNav>
                    <IconButton $w={25} aria-label="Vorheriges Blatt"><Caret dir="left" color="#c0c0c0" /></IconButton>
                    <IconButton $w={25} aria-label="Nächstes Blatt"><Caret dir="right" color="#c0c0c0" /></IconButton>
                  </SheetNav>
                  {['Tabelle1', 'Tabelle2', 'Tabelle3', 'Tabelle4'].map((t, i) => (
                    <SheetTab key={t} $active={i === 0}>{t}</SheetTab>
                  ))}
                  <AddSheet aria-label="Neues Blatt">
                    <svg width="18" height="18" viewBox="0 0 18 18" fill="none" stroke="#777"><circle cx="9" cy="9" r="7.500" strokeWidth="1.200" /><path d="M9 5v8M5 9h8" strokeWidth="2" /></svg>
                  </AddSheet>
                  <Dots $push><ThreeDots /></Dots>
                  <HScroll>
                    <ScrollButton aria-label="Nach links"><Caret dir="left" size={8} /></ScrollButton>
                    <HThumb />
                    <Track />
                    <ScrollButton aria-label="Nach rechts"><Caret dir="right" size={8} /></ScrollButton>
                  </HScroll>
                </SheetBarItems>
              </SheetBar>
            </SheetArea>
          </Main>

          <StatusBar>
            <span>BEREIT</span>
            <IconButton $w={52} $h={20} aria-label="Makro aufzeichnen">
              <svg width="13" height="13" viewBox="0 0 13 13" fill="none" stroke="#fff">
                <circle cx="3" cy="3" r="3" fill="#fff" stroke="none" /><path d="M7 1h6v2.500H7z" fill="#fff" stroke="none" />
                <path d="M1.500 6.500v6h11v-9M3 6.500h8M3 8.500h8M3 10.500h8" /><path d="M5.500 6v6M8.500 6v6" stroke={GREEN} strokeWidth=".7" />
              </svg>
            </IconButton>
            <StatusTools>
              <ViewButton $active aria-label="Normal">
                <svg width="13" height="13" viewBox="0 0 13 13" fill="none" stroke="#fff"><path d="M.5.5h12v12H.5zM4.500 0v13M8.500 0v13M0 4.500h13M0 8.500h13" /></svg>
              </ViewButton>
              <ViewButton aria-label="Seitenlayout">
                <svg width="14" height="13" viewBox="0 0 14 13" fill="none" stroke="#fff"><path d="M.5.5h13v12H.5zM3.500 2.500h7v8h-7zM5 4.500h4M5 6.500h4M5 8.500h4" /></svg>
              </ViewButton>
              <ViewButton aria-label="Umbruchvorschau">
                <svg width="14" height="13" viewBox="0 0 14 13"><path d="M.5.5h13v12H.5z" fill="none" stroke="#fff" /><path d="M1 1h4v7H1zM6 1h3v7H6z" fill="#fff" /></svg>
              </ViewButton>
              <IconButton $w={15} $h={16} aria-label="Verkleinern"><svg width="6" height="2"><path d="M0 0h6v2H0z" fill="#fff" /></svg></IconButton>
              <Zoom type="range" min={0} max={100} value={zoom} onChange={(e) => setZoom(Number(e.target.value))} aria-label="Zoom" />
              <IconButton $w={11} $h={16} aria-label="Vergrößern"><svg width="8" height="8"><path d="M3 0h2v3h3v2H5v3H3V5H0V3h3z" fill="#fff" /></svg></IconButton>
              <ZoomValue>100 %</ZoomValue>
            </StatusTools>
          </StatusBar>
        </Window>
      </Desktop>
    </>
  );
}
